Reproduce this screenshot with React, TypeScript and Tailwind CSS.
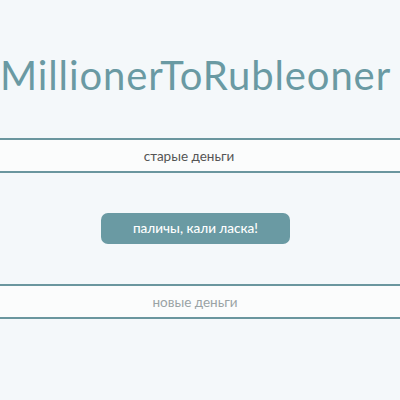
export default function App() {
  return (
    <div className="min-h-[400px] w-[400px] bg-[#f4f8fa] pt-[50px] font-['Lato',sans-serif]">
      <h1 className="pr-[9px] text-center text-[40px] leading-[50px] font-normal text-[#6a9aa3] tracking-[0.9px] whitespace-nowrap">
        MillionerToRubleoner
      </h1>
      <input
        className="mt-[38px] block w-full h-[35px] bg-[#fbfcfc] border-y-2 border-[#6a969e] pr-[22px] text-center text-[13.5px] text-[#555] outline-none"
        defaultValue="старые деньги"
      />
      <div className="flex justify-center pr-[9px] mt-[40px]">
        <button className="w-[189px] h-[31px] rounded-[7px] bg-[#6a9aa3] text-white text-[13.5px] font-medium">
          паличы, кали ласка!
        </button>
      </div>
      <input
        className="mt-[40px] block w-full h-[35px] bg-[#fbfcfc] border-y-2 border-[#6a969e] pr-[10px] text-center text-[13.5px] text-[#666] placeholder:text-[#9aa3a5] outline-none"
        placeholder="новые деньги"
      />
    </div>
  );
}
